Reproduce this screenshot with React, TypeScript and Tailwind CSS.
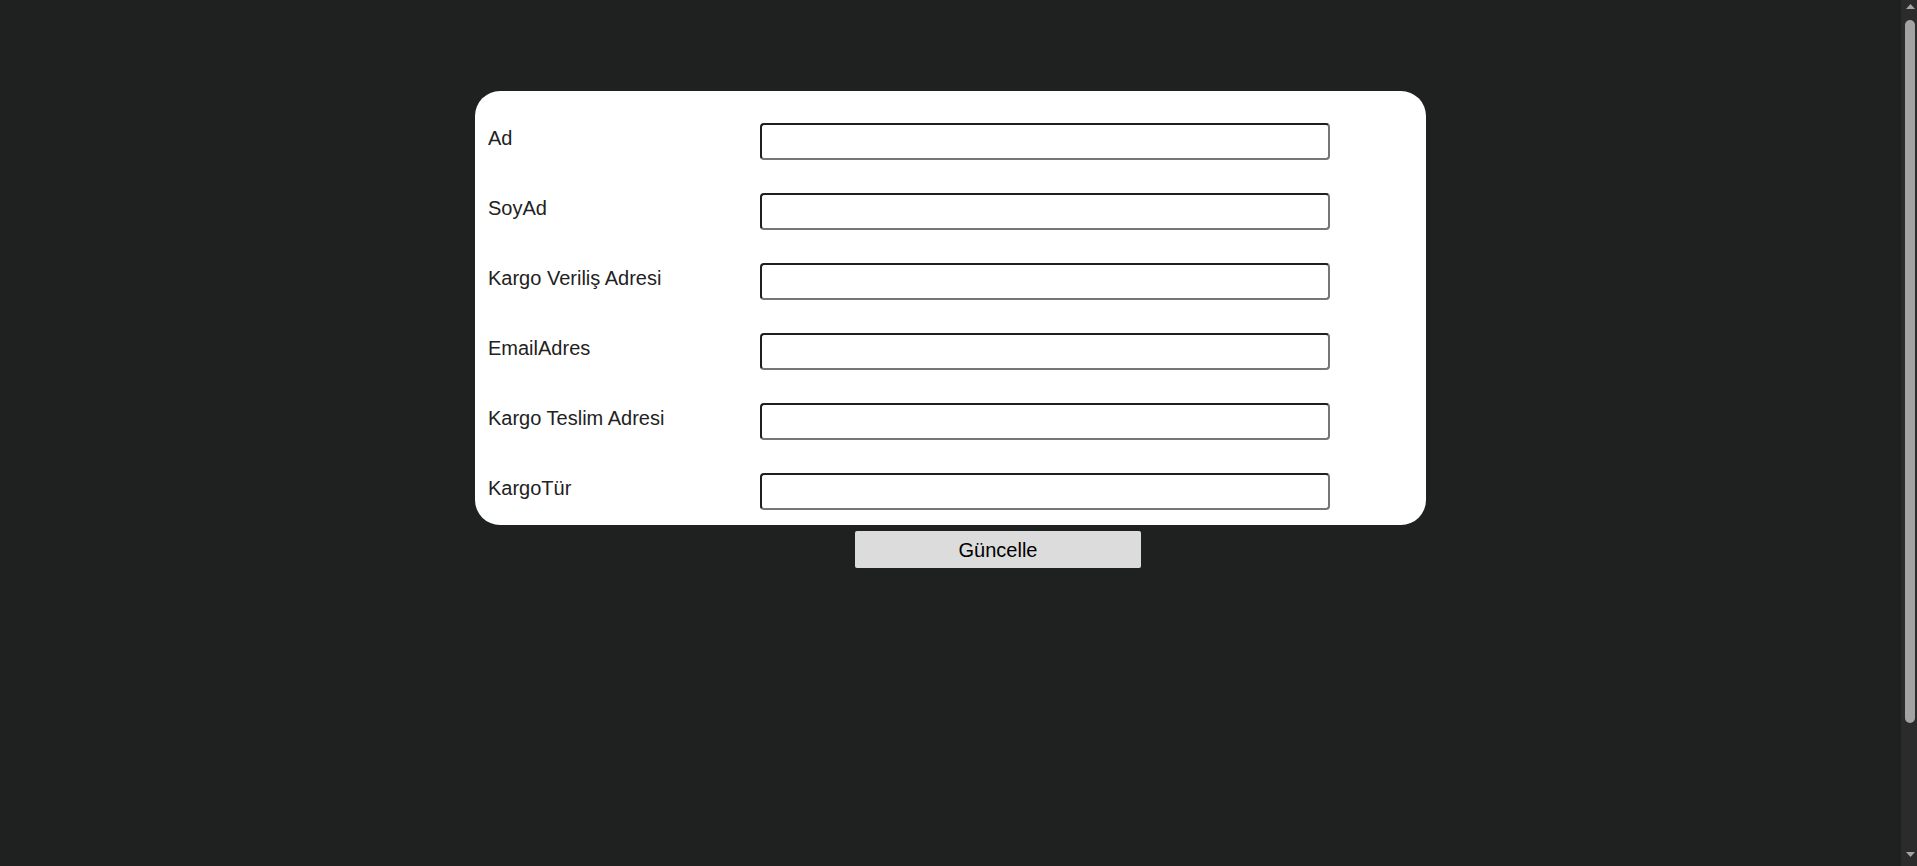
import React from "react";

const fields = [
  "Ad",
  "SoyAd",
  "Kargo Veriliş Adresi",
  "EmailAdres",
  "Kargo Teslim Adresi",
  "KargoTür",
];

const App = () => {
  return (
    <div className="h-screen flex overflow-hidden bg-[#1f2120] font-['Liberation_Sans',Arial,sans-serif]">
      <div className="flex-1 pt-[91px] flex flex-col items-center">
        {/* form card */}
        <form className="w-[951px] bg-white rounded-[25px] pt-[32px] pb-[15px] px-[13px] flex flex-col gap-[33px]">
          {fields.map((f) => (
            <div key={f} className="flex items-start">
              <label className="w-[272px] pt-[4px] text-[20px] leading-[23px] text-[#222]">
                {f}
              </label>
              <input
                type="text"
                className="w-[570px] h-[37px] rounded-[4px] border-2 border-t-[#1f1f1f] border-l-[#1f1f1f] border-b-[#767676] border-r-[#767676] bg-white px-1 outline-none"
              />
            </div>
          ))}
        </form>
        <button className="mt-[6px] ml-[95px] w-[286px] h-[37px] rounded-[2px] bg-[#dcdcdc] text-[20px] text-black">
          Güncelle
        </button>
      </div>
      {/* scrollbar */}
      <div className="w-[16px] shrink-0 bg-[#2b2b2b] flex flex-col items-center pl-[2px] pt-[4px] pb-[9px]">
        <svg width="9" height="5" viewBox="0 0 9 5">
          <polygon points="4.5,0 9,5 0,5" fill="#a3a3a3" />
        </svg>
        <div className="mt-[11px] w-[10px] h-[703px] rounded-full bg-[#a3a3a3]" />
        <div className="flex-1" />
        <svg width="9" height="5" viewBox="0 0 9 5">
          <polygon points="0,0 9,0 4.5,5" fill="#a3a3a3" />
        </svg>
      </div>
    </div>
  );
};

export default App;
